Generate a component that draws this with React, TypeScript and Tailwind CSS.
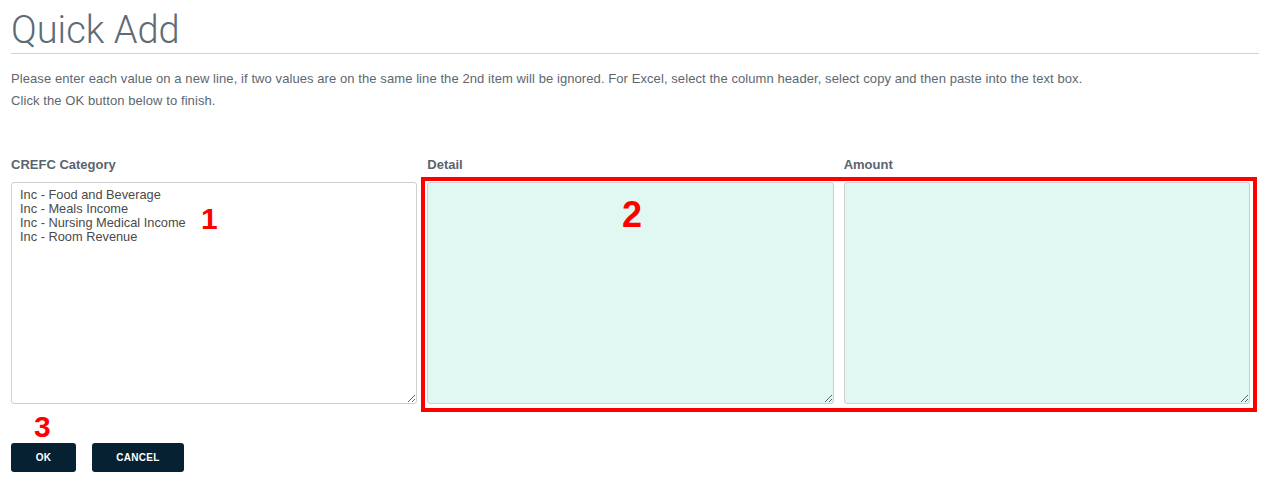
import React from "react";

const font = { fontFamily: '"Liberation Sans", Arial, sans-serif' };

export default function App() {
  return (
    <div className="w-[1265px] h-[490px] bg-white overflow-hidden pl-[11px] pr-[6px]" style={font}>
      <h1
        className="text-[38px] leading-[40px] pt-[10px] text-[#5f6b77]"
        style={{ fontFamily: 'Roboto, "Liberation Sans", sans-serif', fontWeight: 300 }}
      >
        Quick Add
      </h1>
      <div className="mt-[3px] h-px bg-[#d3d3d3]" />
      <div className="mt-[14px] text-[13px] leading-[22px] tracking-[0.08px] text-[#5e6770]">
        <p>
          Please enter each value on a new line, if two values are on the same line the 2nd item will be ignored. For Excel, select the column header, select copy and then paste into the text box.
        </p>
        <p>Click the OK button below to finish.</p>
      </div>

      <div className="relative mt-[45px] mr-[9px] grid grid-cols-3 gap-x-[10px]">
        <label className="text-[13px] font-bold text-[#5a646e] leading-[15px] pb-[10px]">CREFC Category</label>
        <label className="text-[13px] font-bold text-[#5a646e] leading-[15px] pb-[10px]">Detail</label>
        <label className="text-[13px] font-bold text-[#5a646e] leading-[15px] pb-[10px]">Amount</label>
        <textarea
          className="block h-[222px] w-full rounded-[3px] border border-[#cfcfcf] bg-white px-[8px] py-[5px] text-[12.8px] leading-[14px] text-[#4a4a4a] outline-none"
          style={font}
          defaultValue={"Inc - Food and Beverage\nInc - Meals Income\nInc - Nursing Medical Income\nInc - Room Revenue"}
        />
        <textarea
          className="block h-[222px] w-full rounded-[3px] border border-[#cfcfcf] bg-[#e1f7f1] px-[8px] py-[5px] text-[12.8px] leading-[14px] outline-none"
          style={font}
        />
        <textarea
          className="block h-[222px] w-full rounded-[3px] border border-[#cfcfcf] bg-[#e1f7f1] px-[8px] py-[5px] text-[12.8px] leading-[14px] outline-none"
          style={font}
        />
        {/* annotation overlay */}
        <div className="pointer-events-none absolute left-[410px] top-[20px] h-[235px] w-[836px] border-4 border-[#ff0000]" />
        <span className="pointer-events-none absolute left-[190px] top-[47px] text-[30px] font-bold leading-none text-[#ff0000]">1</span>
        <span className="pointer-events-none absolute left-[611px] top-[40px] text-[36px] font-bold leading-none text-[#ff0000]">2</span>
      </div>

      <div className="relative mt-[39px] flex gap-[16px]">
        <span className="pointer-events-none absolute left-[23px] top-[-31px] text-[30px] font-bold leading-none text-[#ff0000]">3</span>
        <button className="h-[29px] w-[65px] rounded-[3px] bg-[#062232] text-[10px] font-bold tracking-[0.3px] text-white">OK</button>
        <button className="h-[29px] w-[92px] rounded-[3px] bg-[#062232] text-[10px] font-bold tracking-[0.3px] text-white">CANCEL</button>
      </div>
    </div>
  );
}
